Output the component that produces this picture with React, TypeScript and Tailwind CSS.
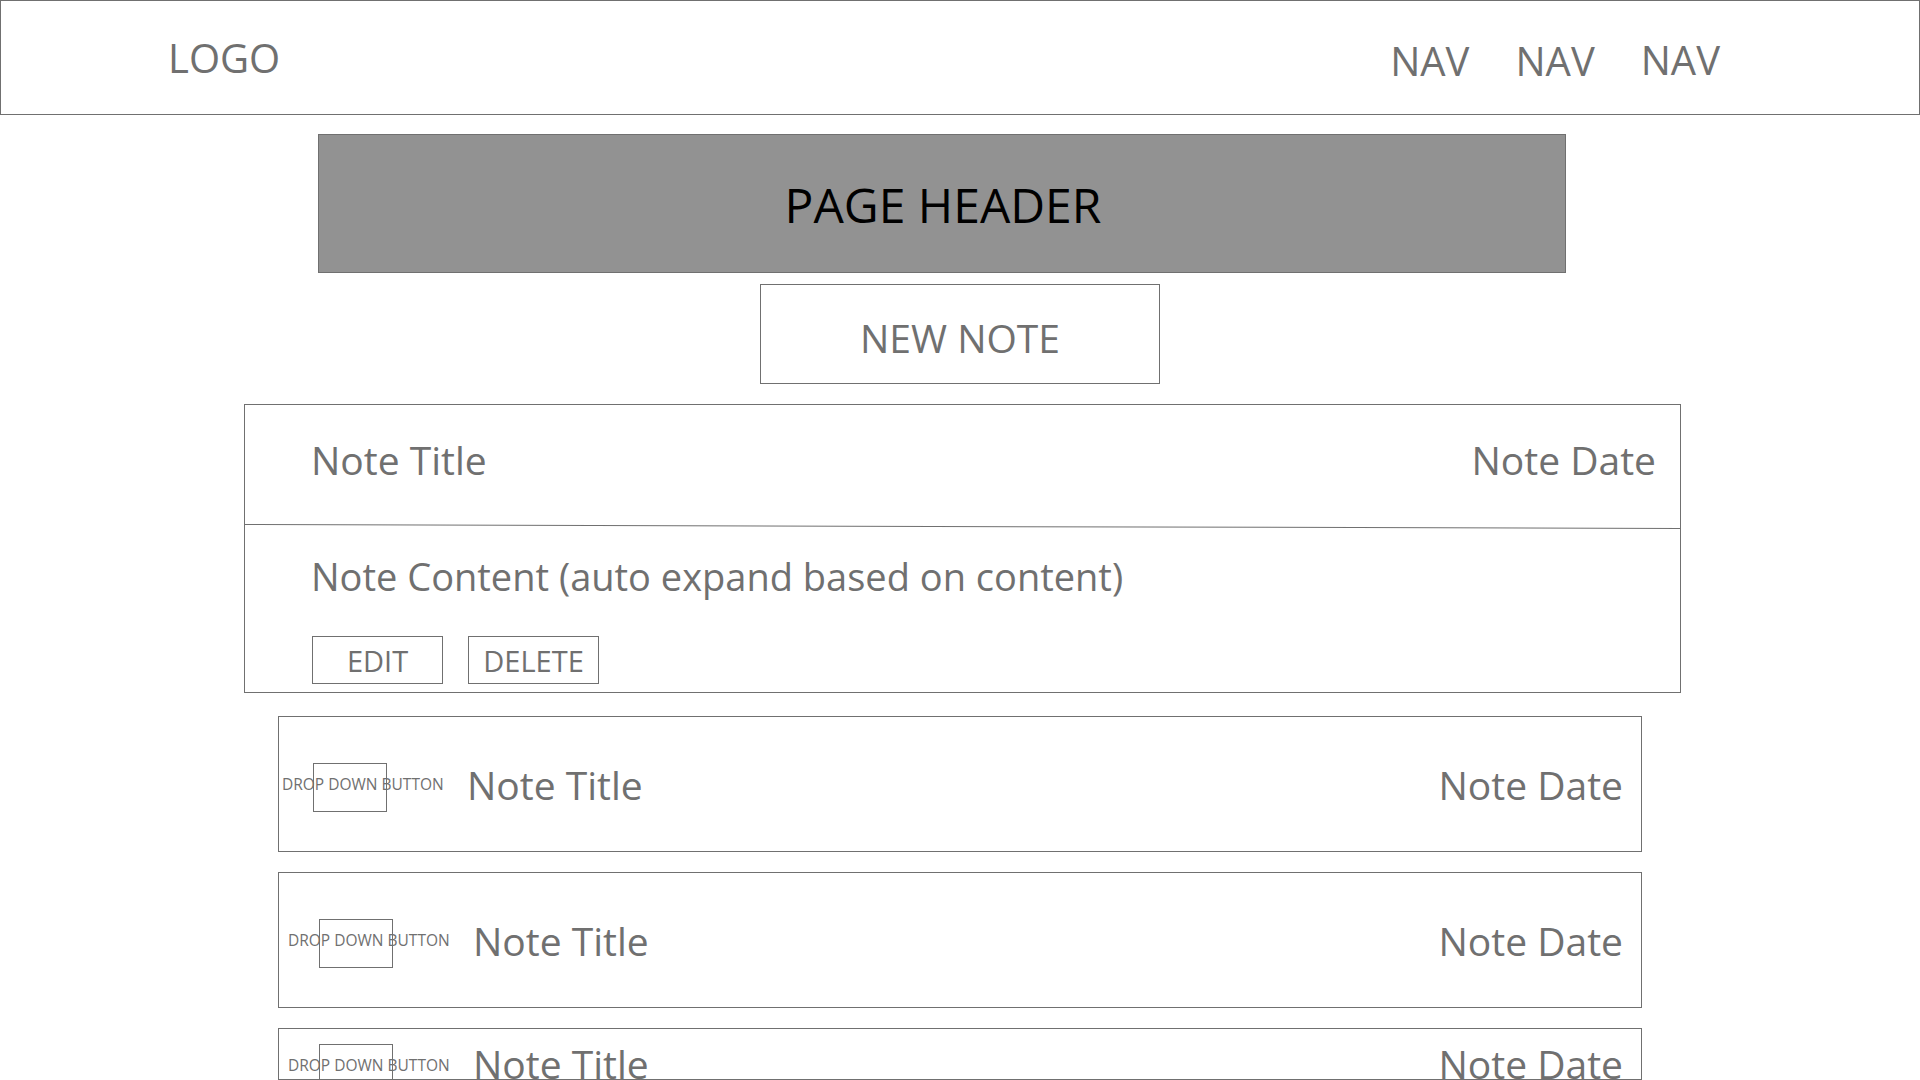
import React from "react";

function DropDown({ label }: { label: string }) {
  return (
    <div className="relative w-[185px] shrink-0">
      <span className="block text-[15.5px] leading-none whitespace-nowrap">{label}</span>
      <div className="absolute left-[31px] top-[-14px] w-[74px] h-[49px] border border-[#707070]" />
    </div>
  );
}

function NoteRow({
  pl,
  dropMt,
  textMt,
  h,
  mt,
}: {
  pl: string;
  dropMt: string;
  textMt: string;
  h: string;
  mt: string;
}) {
  return (
    <div className={`${mt} ml-[278px] w-[1364px] ${h} border border-[#707070] overflow-hidden flex items-start ${pl} pr-[18px]`}>
      <div className={dropMt}>
        <DropDown label="DROP DOWN BUTTON" />
      </div>
      <span className={`${textMt} text-[39px] leading-none whitespace-nowrap`}>Note Title</span>
      <span className={`${textMt} ml-auto text-[39px] leading-none whitespace-nowrap`}>Note Date</span>
    </div>
  );
}

export default function App() {
  return (
    <div
      className="w-[1920px] h-[1080px] overflow-hidden bg-white text-[#707070]"
      style={{ fontFamily: '"Open Sans", "Noto Sans", sans-serif' }}
    >
      {/* Top bar */}
      <header className="h-[115px] border border-[#707070] flex items-start pt-[37px] pl-[167px] pr-[199px]">
        <span className="text-[40px] leading-none">LOGO</span>
        <nav className="ml-auto mt-[3px] flex gap-[46px] text-[40px] leading-none">
          <span>NAV</span>
          <span>NAV</span>
          <span className="-mt-px">NAV</span>
        </nav>
      </header>

      {/* Page header */}
      <div className="mt-[19px] ml-[318px] w-[1248px] h-[139px] bg-[#929292] border border-[#707070] flex items-center justify-center pl-[2px] pt-[2px]">
        <span className="text-[48px] leading-none text-black">PAGE HEADER</span>
      </div>

      {/* New note */}
      <div className="mt-[11px] mx-auto w-[400px] h-[100px] border border-[#707070] flex items-center justify-center pt-[6px]">
        <span className="text-[39px] leading-none">NEW NOTE</span>
      </div>

      {/* Expanded note */}
      <div className="mt-[20px] ml-[244px] w-[1437px] h-[289px] border border-[#707070] flex flex-col">
        <div className="h-[121px] flex items-start justify-between pl-[66px] pr-[24px] pt-[35px]">
          <span className="text-[39px] leading-none">Note Title</span>
          <span className="text-[39px] leading-none">Note Date</span>
        </div>
        <div className="h-px bg-[#707070] rotate-[0.16deg]" />
        <div className="h-[165px] flex flex-col items-start pl-[66px] pt-[30px]">
          <span className="text-[38px] leading-none whitespace-nowrap">
            Note Content (auto expand based on content)
          </span>
          <div className="mt-[41px] ml-[1px] flex gap-[25px]">
            <button className="w-[131px] h-[48px] border border-[#707070] flex items-center justify-center text-[29px] leading-none">
              EDIT
            </button>
            <button className="w-[131px] h-[48px] border border-[#707070] flex items-center justify-center text-[29px] leading-none">
              DELETE
            </button>
          </div>
        </div>
      </div>

      {/* Collapsed notes */}
      <NoteRow mt="mt-[23px]" h="h-[136px]" pl="pl-[3px]" dropMt="mt-[60px]" textMt="mt-[48px]" />
      <NoteRow mt="mt-[20px]" h="h-[136px]" pl="pl-[9px]" dropMt="mt-[60px]" textMt="mt-[48px]" />
      <NoteRow mt="mt-[20px]" h="h-[52px]" pl="pl-[9px]" dropMt="mt-[29px]" textMt="mt-[15px]" />
    </div>
  );
}
